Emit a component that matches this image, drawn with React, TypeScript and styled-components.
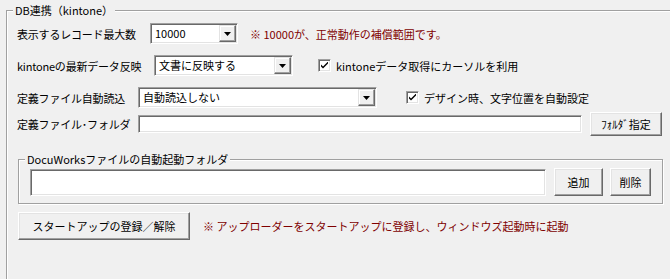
import React from "react";
import styled, { createGlobalStyle } from "styled-components";

const GlobalStyle = createGlobalStyle`
  html, body {
    margin: 0;
    padding: 0;
    background: #f0f0f0;
  }
  body {
    font-family: "Noto Sans CJK JP", "Liberation Sans", sans-serif;
    font-size: 11px;
    color: #000;
  }
`;

const Page = styled.div`
  width: 670px;
  height: 279px;
  overflow: hidden;
  padding: 2px 0 0 6px;
  box-sizing: border-box;
`;

// etched group box, like a WinForms GroupBox
const Group = styled.fieldset<{ $w: number; $h?: number; $mt?: number; $ml?: number }>`
  margin: ${(p) => p.$mt ?? 0}px 0 0 ${(p) => p.$ml ?? 0}px;
  padding: 0;
  min-width: 0;
  width: ${(p) => p.$w}px;
  ${(p) => (p.$h ? `height: ${p.$h}px;` : "")}
  box-sizing: border-box;
  border: 1px solid #a0a0a0;
  box-shadow: inset 1px 1px 0 #fff, 1px 1px 0 #fff;
`;

const Legend = styled.legend`
  margin-left: 6px;
  padding: 0 2px;
  height: 16px;
  line-height: 16px;
  background: #f0f0f0;
`;

const GroupBody = styled.div<{ $pad: string }>`
  display: flex;
  flex-direction: column;
  padding: ${(p) => p.$pad};
`;

const Row = styled.div<{ $h: number; $mt?: number; $ml?: number }>`
  display: flex;
  align-items: center;
  height: ${(p) => p.$h}px;
  margin-top: ${(p) => p.$mt ?? 0}px;
  margin-left: ${(p) => p.$ml ?? 0}px;
`;

const Label = styled.span<{ $w: number }>`
  flex: none;
  width: ${(p) => p.$w}px;
  white-space: nowrap;
  line-height: 14px;
  letter-spacing: -0.2px;
`;

const Sunken = styled.div<{ $w: number; $h: number }>`
  flex: none;
  display: flex;
  width: ${(p) => p.$w}px;
  height: ${(p) => p.$h}px;
  box-sizing: border-box;
  padding: 1px;
  border: 1px solid;
  border-color: #a0a0a0 #fff #fff #a0a0a0;
  box-shadow: inset 1px 1px 0 #696969, inset -1px -1px 0 #e3e3e3;
  background: #fff;
`;

const ComboText = styled.span`
  flex: 1;
  padding-left: 3px;
  line-height: 17px;
  white-space: nowrap;
  overflow: hidden;
`;

const DropButton = styled.span`
  flex: none;
  display: flex;
  align-items: center;
  justify-content: center;
  width: 17px;
  height: 17px;
  box-sizing: border-box;
  border: 1px solid;
  border-color: #e3e3e3 #696969 #696969 #e3e3e3;
  box-shadow: inset -1px -1px 0 #a0a0a0, inset 1px 1px 0 #fff;
  background: #f0f0f0;
`;

const Button = styled.button<{ $w: number; $h: number; $ml?: number }>`
  flex: none;
  width: ${(p) => p.$w}px;
  height: ${(p) => p.$h}px;
  margin-left: ${(p) => p.$ml ?? 0}px;
  padding: 0;
  box-sizing: border-box;
  border: 1px solid;
  border-color: #fff #696969 #696969 #fff;
  box-shadow: inset -1px -1px 0 #a0a0a0, inset 1px 1px 0 #e3e3e3;
  background: #f0f0f0;
  font: inherit;
  color: #000;
  white-space: nowrap;
`;

const CheckWrap = styled.label<{ $ml: number }>`
  display: flex;
  align-items: center;
  margin-left: ${(p) => p.$ml}px;
  white-space: nowrap;
`;

const CheckBox = styled.span`
  flex: none;
  display: flex;
  align-items: center;
  justify-content: center;
  width: 13px;
  height: 13px;
  box-sizing: border-box;
  border: 1px solid;
  border-color: #a0a0a0 #fff #fff #a0a0a0;
  box-shadow: inset 1px 1px 0 #696969, inset -1px -1px 0 #e3e3e3;
  background: #fff;
`;

const CheckText = styled.span`
  margin-left: 5px;
`;

const Note = styled.span<{ $ml: number }>`
  margin-left: ${(p) => p.$ml}px;
  color: #800000;
  white-space: nowrap;
`;

const Combo = ({ w, value }: { w: number; value: string }) => (
  <Sunken $w={w} $h={21}>
    <ComboText>{value}</ComboText>
    <DropButton>
      <svg width="7" height="4" viewBox="0 0 7 4">
        <path d="M0 0h7L3.5 4z" fill="#000" />
      </svg>
    </DropButton>
  </Sunken>
);

const Check = ({ ml, text }: { ml: number; text: string }) => (
  <CheckWrap $ml={ml}>
    <CheckBox>
      <svg width="7" height="7" viewBox="0 0 7 7">
        <path d="M0 2.5l2 2 5-5v2l-5 5-2-2z" fill="#000" />
      </svg>
    </CheckBox>
    <CheckText>{text}</CheckText>
  </CheckWrap>
);

const App = () => {
  return (
    <>
      <GlobalStyle />
      <Page>
        <Group $w={720} $h={330}>
          <Legend>DB連携（kintone）</Legend>
          <GroupBody $pad="5px 0 0 10px">
            <Row $h={21}>
              <Label $w={133}>表示するレコード最大数</Label>
              <Combo w={88} value="10000" />
              <Note $ml={12}>※ 10000が、正常動作の補償範囲です。</Note>
            </Row>
            <Row $h={21} $mt={11}>
              <Label $w={137}>kintoneの最新データ反映</Label>
              <Combo w={139} value="文書に反映する" />
              <Check ml={25} text="kintoneデータ取得にカーソルを利用" />
            </Row>
            <Row $h={21} $mt={11}>
              <Label $w={121}>定義ファイル自動読込</Label>
              <Combo w={239} value="自動読込しない" />
              <Check ml={29} text="デザイン時、文字位置を自動設定" />
            </Row>
            <Row $h={24} $mt={4}>
              <Label $w={121}>定義ファイル･フォルダ</Label>
              <Sunken $w={444} $h={18} />
              <Button $w={72} $h={24} $ml={8}>
                ﾌｫﾙﾀﾞ指定
              </Button>
            </Row>
            <Group $w={645} $h={53} $mt={15} $ml={1}>
              <Legend>DocuWorksファイルの自動起動フォルダ</Legend>
              <GroupBody $pad="1px 0 0 11px">
                <Row $h={28}>
                  <Sunken $w={516} $h={27} />
                  <Button $w={49} $h={28} $ml={8}>
                    追加
                  </Button>
                  <Button $w={41} $h={28} $ml={7}>
                    削除
                  </Button>
                </Row>
              </GroupBody>
            </Group>
            <Row $h={28} $mt={8} $ml={1}>
              <Button $w={172} $h={28}>
                スタートアップの登録／解除
              </Button>
              <Note $ml={13}>
                ※ アップローダーをスタートアップに登録し、ウィンドウズ起動時に起動
              </Note>
            </Row>
          </GroupBody>
        </Group>
      </Page>
    </>
  );
};

export default App;
